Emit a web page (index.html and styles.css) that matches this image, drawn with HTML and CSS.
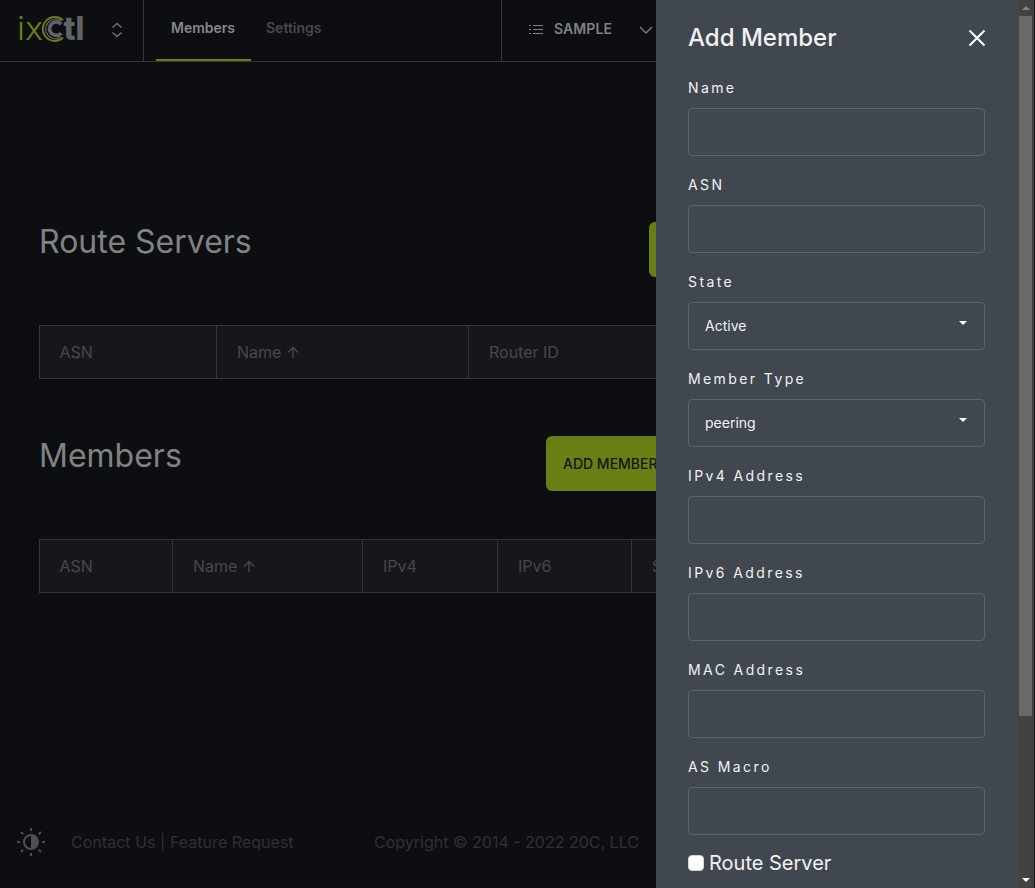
FILE: index.html
```html
<!DOCTYPE html>
<html lang="en">
<head>
<meta charset="utf-8">
<title>ixCtl</title>
<link rel="stylesheet" href="styles.css">
</head>
<body>
<div class="page">
  <header class="topbar">
    <div class="brand">
      <svg class="logo" width="68" height="32" viewBox="0 0 68 32">
        <text class="logo-ix" x="-1" y="26" textLength="26" lengthAdjust="spacingAndGlyphs">ix</text>
        <g fill="none">
          <path d="M45 6.200A12 12 0 1 0 45 23.800" stroke="#687f14" stroke-width="1.900"/>
          <path d="M43 6.900A9.800 9.800 0 1 0 43 23.100" stroke="#626366" stroke-width="1.200"/>
          <path d="M43.200 10.200A6.700 6.700 0 1 0 43.200 19.200" stroke="#626366" stroke-width="3.700"/>
        </g>
        <text class="logo-tl" x="45.500" y="26" textLength="21" lengthAdjust="spacingAndGlyphs">tl</text>
      </svg>
      <svg class="updown" width="12" height="16" viewBox="0 0 12 16"><path d="M1.500 5.500 6 1.500l4.500 4M1.500 10.500l4.500 4 4.500-4"/></svg>
    </div>
    <nav class="tabs">
      <a class="tab active">Members</a>
      <a class="tab">Settings</a>
    </nav>
    <div class="org">
      <svg class="list" width="15" height="12" viewBox="0 0 15 12"><path d="M4 1.500h10M4 5.500h10M4 9.500h10M0 1.500h2M0 5.500h2M0 9.500h2"/></svg>
      <span>SAMPLE</span>
      <svg class="chev" width="14" height="9" viewBox="0 0 14 9"><path d="M1 1l6 6 6-6"/></svg>
    </div>
  </header>
  <main class="content">
    <section class="block">
      <div class="heading"><h2>Route Servers</h2><button class="btn btn-server" aria-label="Add route server"></button></div>
      <div class="table servers"><div>ASN</div><div>Name <svg class="arrow" width="12" height="13" viewBox="0 0 12 13"><path d="M6 12V1.500M1 6.500l5-5 5 5"/></svg></div><div>Router ID</div></div>
    </section>
    <section class="block">
      <div class="heading"><h2>Members</h2><button class="btn btn-member">ADD MEMBER</button></div>
      <div class="table members"><div>ASN</div><div>Name <svg class="arrow" width="12" height="13" viewBox="0 0 12 13"><path d="M6 12V1.500M1 6.500l5-5 5 5"/></svg></div><div>IPv4</div><div>IPv6</div><div>S</div></div>
    </section>
  </main>
  <footer class="footer">
    <svg class="theme" width="28" height="28" viewBox="0 0 28 28">
      <circle cx="14" cy="14" r="7" fill="none" stroke="#4e4f51" stroke-width="2"/>
      <path d="M14 7a7 7 0 0 1 0 14z" fill="#4e4f51"/>
      <path d="M14 0v3M14 25v3M0 14h3M25 14h3M4 4l2.200 2.200M21.800 21.800 24 24M24 4l-2.200 2.200M6.200 21.800 4 24" stroke="#4e4f51" stroke-width="2"/>
    </svg>
    <span class="links">Contact Us | Feature Request</span>
    <span class="copy">Copyright © 2014 - 2022 20C, LLC</span>
  </footer>
</div>
<aside class="drawer">
  <form class="form">
    <div class="title"><h3>Add Member</h3><svg width="18" height="18" viewBox="0 0 18 18"><path d="M1.500 1.500l15 15M16.500 1.500l-15 15"/></svg></div>
    <div class="field"><label>Name</label><div class="box"></div></div>
    <div class="field"><label>ASN</label><div class="box"></div></div>
    <div class="field"><label>State</label><div class="box"><span>Active</span><i class="caret"></i></div></div>
    <div class="field"><label>Member Type</label><div class="box"><span>peering</span><i class="caret"></i></div></div>
    <div class="field"><label>IPv4 Address</label><div class="box"></div></div>
    <div class="field"><label>IPv6 Address</label><div class="box"></div></div>
    <div class="field"><label>MAC Address</label><div class="box"></div></div>
    <div class="field"><label>AS Macro</label><div class="box"></div></div>
    <div class="check"><i class="tick"></i><span>Route Server</span></div>
  </form>
  <div class="scrollbar"><i class="up"></i><div class="thumb"></div><i class="down"></i></div>
</aside>
</body>
</html>
```
FILE: styles.css
```css
* { box-sizing: border-box; }
body { margin: 0; background: #0d0e12; font-family: Inter, "Liberation Sans", sans-serif; height: 888px; overflow: hidden; }
svg { display: block; flex: none; }
h2, h3 { margin: 0; font-weight: 400; }
.page { height: 888px; width: 656px; display: flex; flex-direction: column; }
.topbar { height: 62px; border-bottom: 1px solid #343538; display: flex; flex: none; }
.brand { width: 144px; border-right: 1px solid #343538; display: flex; align-items: flex-start; padding: 14px 0 0 18px; }
.logo { overflow: visible; }
.logo-ix { font-size: 32px; font-weight: 300; fill: #687f14; }
.logo-tl { font-size: 32px; font-weight: 800; fill: #626366; }
.updown { margin: 8px 0 0 25px; fill: none; stroke: #737476; stroke-width: 1.4; }
.tabs { display: flex; padding-left: 12px; flex: 1; }
.tab { height: 61px; padding: 19px 16px 0 15px; font-size: 14px; line-height: 18px; font-weight: 600; color: #47484a; }
.tab.active { width: 95px; color: #87888a; border-bottom: 2px solid #687f14; }
.org { width: 155px; border-left: 1px solid #343538; display: flex; padding: 20px 0 0 27px; font-size: 14px; line-height: 18px; font-weight: 600; color: #818284; }
.org span { width: 85px; margin-left: 10px; letter-spacing: 0.1px; }
.list { margin-top: 4px; stroke: #818284; fill: none; }
.chev { margin-top: 6px; stroke: #818284; stroke-width: 1.3; fill: none; }
.content { flex: 1; padding: 160px 0 0 39px; display: flex; flex-direction: column; gap: 57px; }
.heading { height: 103px; display: flex; justify-content: space-between; align-items: flex-start; }
.heading h2 { font-size: 32px; line-height: 40px; color: #828282; white-space: nowrap; }
.btn { height: 55px; border: 0; border-radius: 6px 0 0 6px; background: #687f14; color: #14161a; font: 500 14px Inter, sans-serif; text-align: left; white-space: nowrap; flex: none; }
.btn-server { width: 7px; padding: 0; }
.btn-member { width: 110px; padding: 0 0 0 17px; }
.table { height: 54px; display: grid; border: 1px solid #343538; border-right: 0; background: #16171c; color: #47484a; font-size: 16px; }
.table div { display: flex; align-items: center; padding-left: 20px; gap: 6px; }
.table div:first-child { padding-left: 19.5px; }
.table div + div { border-left: 1px solid #343538; }
.servers { grid-template-columns: 176px 252px 188px; }
.members { grid-template-columns: 132px 190px 135px 134px 25px; }
.arrow { stroke: #47484a; stroke-width: 1.4; fill: none; }
.footer { height: 92px; padding-left: 17px; display: flex; align-items: center; font-size: 16px; color: #303134; white-space: nowrap; }
.links { margin-left: 26px; width: 303px; letter-spacing: 0.03px; }
.drawer { position: fixed; top: 0; right: 0; width: 379px; height: 888px; background: #40474f; display: flex; overflow: hidden; color: #f1f2f3; }
.form { width: 362px; padding: 21px 33px 0 32px; }
.title { display: flex; justify-content: space-between; height: 56px; }
.title h3 { font-size: 24px; line-height: 34px; font-weight: 500; }
.title svg { margin-top: 8px; stroke: #fff; stroke-width: 2; fill: none; margin-right: -1px; }
.field { height: 97px; }
.field label { display: block; height: 31px; font-size: 14px; line-height: 22px; letter-spacing: 2.4px; font-weight: 400; }
.box { height: 48px; border: 1px solid #5c636c; border-radius: 4px; display: flex; align-items: center; justify-content: space-between; padding: 0 17px 0 16px; font-size: 14px; font-weight: 400; }
.box span { margin-bottom: 2px; }
.caret { border: 4px solid transparent; border-top-color: #fff; border-bottom: 0; margin-bottom: 6px; }
.check { display: flex; align-items: center; gap: 5px; font-size: 20px; line-height: 26px; margin-top: -3px; }
.tick { width: 16px; height: 16px; border-radius: 4px; background: #fff; border: 1px solid #d5d7d9; }
.scrollbar { width: 17px; background: #424242; border-right: 1px solid #111; display: flex; flex-direction: column; align-items: center; padding-right: 1px; }
.up { border: 4px solid transparent; border-bottom-color: #878787; border-top: 0; margin: 6px 0; }
.thumb { width: 13px; height: 700px; background: #696969; flex: none; }
.down { border: 4px solid transparent; border-top-color: #fff; border-bottom: 0; margin-top: auto; margin-bottom: 6px; }
```
